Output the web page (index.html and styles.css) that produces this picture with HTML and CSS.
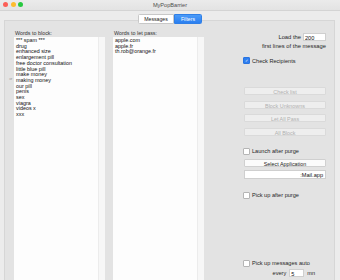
FILE: index.html
```html
<!DOCTYPE html>
<html lang="en">
<head>
    <meta charset="UTF-8">
    <title>MyPopBarrier</title>
    <link rel="stylesheet" href="styles.css">
</head>
<body>
    <div class="window">
        <div class="titlebar">
            <div class="lights">
                <span class="light red"></span>
                <span class="light yellow"></span>
                <span class="light green"></span>
            </div>
            <div class="title">MyPopBarrier</div>
        </div>

        <div class="tabs">
            <span class="tab">Messages</span>
            <span class="tab active">Filters</span>
        </div>

        <div class="box">
            <div class="handle">&#8658;</div>

            <div class="column">
                <div class="label">Words to block:</div>
                <div class="list">
                    <div class="list-text">*** spam ***<br>drug<br>enhanced size<br>enlargement pill<br>free doctor consultation<br>little blue pill<br>make money<br>making money<br>our pill<br>penis<br>sex<br>viagra<br>videos x<br>xxx</div>
                    <div class="scroll"></div>
                </div>
            </div>

            <div class="column">
                <div class="label">Words to let pass:</div>
                <div class="list">
                    <div class="list-text">apple.com<br>apple.fr<br>th.rob@orange.fr</div>
                    <div class="scroll"></div>
                </div>
            </div>

            <div class="side">
                <div class="load-row">
                    <span>Load the</span>
                    <span class="field small">200</span>
                </div>
                <div class="hint">first lines of the message</div>
                <label class="check recip"><span class="box-check on">&#10003;</span>Check Recipients</label>

                <div class="buttons">
                    <div class="btn disabled">Check list</div>
                    <div class="btn disabled">Block Unknowns</div>
                    <div class="btn disabled">Let All Pass</div>
                    <div class="btn disabled">All Block</div>
                </div>

                <label class="check launch"><span class="box-check"></span>Launch after purge</label>
                <div class="btn select">Select Application</div>
                <div class="field app">:Mail.app</div>

                <label class="check pickup"><span class="box-check"></span>Pick up after purge</label>

                <label class="check auto"><span class="box-check"></span>Pick up messages auto</label>
                <div class="every-row">
                    <span>every</span>
                    <span class="field tiny">5</span>
                    <span>mn</span>
                </div>
            </div>
        </div>
    </div>
</body>
</html>
```

FILE: styles.css
```css
html, body {
    margin: 0;
    padding: 0;
    width: 340px;
    height: 280px;
    overflow: hidden;
    background-color: #ececec;
    font-family: 'Liberation Sans', Arial, sans-serif;
    font-size: 5px;
    color: #262626;
}

.window {
    display: flex;
    flex-direction: column;
    height: 280px;
}

.titlebar {
    position: relative;
    height: 10px;
    display: flex;
    align-items: center;
    justify-content: center;
    background: linear-gradient(#ebebeb, #e3e3e3);
    border-bottom: 1px solid #d4d4d4;
}

.lights {
    position: absolute;
    left: 3px;
    top: 2px;
    display: flex;
    gap: 2.5px;
}

.light {
    width: 5px;
    height: 5px;
    border-radius: 50%;
}

.red { background-color: #fc5f57; }
.yellow { background-color: #fdbc2e; }
.green { background-color: #28c840; }

.title {
    font-size: 5.6px;
    line-height: 10px;
    color: #4d4d4d;
}

.tabs {
    display: flex;
    justify-content: center;
    margin-top: 3px;
    position: relative;
    z-index: 2;
}

.tab {
    height: 8px;
    line-height: 8px;
    padding: 0 4px;
    background-color: #fff;
    border: 0.5px solid #c8c8c8;
    font-size: 5.2px;
    color: #222;
}

.tab:first-child {
    width: 26px;
    text-align: center;
    border-radius: 1.5px 0 0 1.5px;
}

.tab.active {
    width: 18px;
    text-align: center;
    background: linear-gradient(#4a9bf8, #2b7ff0);
    border-color: #2f7fe6;
    color: #fff;
    border-radius: 0 1.5px 1.5px 0;
}

.box {
    flex: 1;
    display: flex;
    margin: -4px 5px 0 4px;
    padding: 10px 0 0 2px;
    background-color: #e3e3e3;
    border: 0.5px solid #d6d6d6;
    border-bottom: none;
}

.handle {
    width: 7px;
    padding-top: 45px;
    font-size: 4px;
    color: #777;
    text-align: center;
}

.column {
    display: flex;
    flex-direction: column;
    width: 91px;
    margin-right: 8px;
}

.label {
    height: 5px;
    line-height: 5px;
    padding-left: 1px;
    margin-bottom: 1px;
    font-size: 5.4px;
    color: #333;
}

.list {
    flex: 1;
    display: flex;
    background-color: #fdfdfd;
}

.list-text {
    flex: 1;
    padding: 1px 2px;
    font-size: 5.4px;
    line-height: 5.7px;
    color: #111;
}

.scroll {
    width: 6px;
    background-color: #f7f7f7;
    border-left: 0.5px solid #ececec;
}

.side {
    flex: 1;
    display: flex;
    flex-direction: column;
    align-items: flex-end;
    padding: 1px 8px 0 0;
}

.load-row {
    display: flex;
    align-items: center;
    gap: 2px;
    height: 9px;
    font-size: 5.8px;
}

.field {
    background-color: #fff;
    border: 0.5px solid #cfcfcf;
    height: 8px;
    line-height: 8px;
    font-size: 5.6px;
    color: #111;
    box-sizing: border-box;
}

.field.small {
    width: 23px;
    padding-left: 1px;
}

.hint {
    margin-top: 2px;
    height: 6px;
    line-height: 6px;
    font-size: 5.8px;
}

.check {
    display: flex;
    align-items: center;
    gap: 2px;
    width: 83px;
    height: 7px;
    font-size: 5.6px;
}

.box-check {
    width: 5px;
    height: 5px;
    background-color: #fff;
    border: 0.5px solid #b5b5b5;
    border-radius: 1px;
    font-size: 4px;
    line-height: 5px;
    text-align: center;
    color: #fff;
}

.box-check.on {
    background-color: #2f7ff0;
    border-color: #2a74e0;
}

.recip {
    margin-top: 8px;
}

.buttons {
    display: flex;
    flex-direction: column;
    gap: 5.5px;
    margin-top: 23px;
}

.btn {
    width: 82px;
    height: 8px;
    line-height: 8px;
    text-align: center;
    font-size: 5.4px;
    border-radius: 1px;
    box-sizing: border-box;
}

.btn.disabled {
    background-color: #eeeeee;
    border: 0.5px solid #dadada;
    color: #b0b0b0;
}

.launch {
    margin-top: 12px;
}

.btn.select {
    margin-top: 4px;
    background-color: #fbfbfb;
    border: 0.5px solid #d0d0d0;
    color: #222;
}

.field.app {
    width: 82px;
    margin-top: 3px;
    text-align: right;
    padding-right: 2px;
    height: 9px;
    line-height: 9px;
}

.pickup {
    margin-top: 13px;
}

.auto {
    margin-top: 61px;
}

.every-row {
    display: flex;
    align-items: center;
    gap: 3px;
    margin-top: 2px;
    padding-right: 11px;
    font-size: 5.6px;
}

.field.tiny {
    width: 15px;
    padding-left: 1px;
}
```
